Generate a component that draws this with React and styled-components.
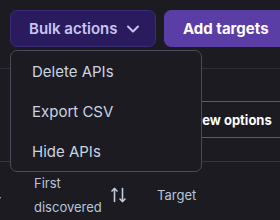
import React from 'react';
import styled, { createGlobalStyle } from 'styled-components';

const Global = createGlobalStyle`
  html, body {
    margin: 0;
    background: #1b1b21;
    overflow: hidden;
  }
  body {
    font-family: Inter, "Noto Sans", sans-serif;
    -webkit-font-smoothing: antialiased;
  }
`;

function ChevronDown() {
  return (
    <svg width="20" height="20" viewBox="0 0 24 24" fill="none" stroke="currentColor" strokeWidth="2.4" strokeLinecap="round" strokeLinejoin="round">
      <path d="m6 9 6 6 6-6" />
    </svg>
  );
}

function SortIcon({ width = 15, height = 16 }) {
  return (
    <svg width={width} height={height} viewBox="0 0 15 16" fill="none" stroke="currentColor" strokeWidth="1.6" strokeLinecap="round" strokeLinejoin="round">
      <path d="M3.5 1.5v13" />
      <path d="M1 4l2.5-2.5L6 4" />
      <path d="M11.5 1.5v13" />
      <path d="M9 12l2.5 2.5L14 12" />
    </svg>
  );
}

export default function App() {
  return (
    <Page>
      <Global />
      <Toolbar>
        <BulkWrap>
          <BulkButton>
            Bulk actions
            <ChevronDown />
          </BulkButton>
          <Menu>
            <MenuItem>Delete APIs</MenuItem>
            <MenuItem>Export CSV</MenuItem>
            <MenuItem>Hide APIs</MenuItem>
          </Menu>
        </BulkWrap>
        <AddButton>Add targets</AddButton>
      </Toolbar>
      <Divider />
      <OptionsRow>
        <ViewOptions>View options</ViewOptions>
      </OptionsRow>
      <TableHead>
        <HeadCell $width="34px">
          <Clipped>
            <SortIcon width={10} height={12} />
          </Clipped>
        </HeadCell>
        <HeadCell $width="123px">
          <Label>
            First
            <br />
            discovered
          </Label>
          <SortIcon />
        </HeadCell>
        <HeadCell>
          <Label>Target</Label>
        </HeadCell>
      </TableHead>
    </Page>
  );
}

const Page = styled.div`
  width: 280px;
  height: 220px;
  overflow: hidden;
`;

const Toolbar = styled.div`
  display: flex;
  gap: 8px;
  padding: 10px 0 0 10px;
  position: relative;
  z-index: 2;
`;

const BulkWrap = styled.div`
  position: relative;
`;

const BulkButton = styled.button`
  display: flex;
  align-items: center;
  gap: 6px;
  height: 37px;
  width: 146px;
  padding: 0 0 0 18px;
  border: 1px solid #3b2c78;
  border-radius: 7px;
  background: #2a1b5e;
  color: #c9c3f3;
  font-family: inherit;
  font-size: 15px;
  font-weight: 600;
  white-space: nowrap;
`;

const AddButton = styled.button`
  height: 37px;
  padding: 0 18px;
  border: 1px solid #5a3ea6;
  border-radius: 7px;
  background: #5a3ea6;
  color: #ffffff;
  font-family: inherit;
  font-size: 15px;
  font-weight: 700;
  white-space: nowrap;
`;

const Menu = styled.div`
  position: absolute;
  top: 40px;
  left: 0;
  width: 190px;
  border: 1px solid #4a4a5c;
  border-radius: 7px;
  background: #1b1b21;
  display: flex;
  flex-direction: column;
`;

const MenuItem = styled.div`
  height: 40px;
  display: flex;
  align-items: center;
  padding-left: 21px;
  color: #cad3e4;
  font-size: 15px;
`;

const Divider = styled.div`
  margin-top: 21px;
  border-top: 1px solid #2d2d37;
`;

const OptionsRow = styled.div`
  display: flex;
  padding: 32px 0 0 176px;
`;

const ViewOptions = styled.div`
  height: 35px;
  flex: 0 0 160px;
  display: flex;
  align-items: center;
  padding-left: 12px;
  border: 1px solid #5a5a6e;
  border-right: none;
  color: #ffffff;
  font-size: 13px;
  font-weight: 700;
  white-space: nowrap;
`;

const TableHead = styled.div`
  margin-top: 23px;
  border-top: 1px solid #363644;
  display: flex;
  align-items: center;
  height: 66px;
`;

const HeadCell = styled.div`
  flex: 0 0 ${({ $width }) => $width || 'auto'};
  display: flex;
  align-items: center;
  gap: 9px;
  color: #c3ccdc;
`;

const Clipped = styled.div`
  margin-left: -9px;
  display: flex;
  color: #c7cfdd;
`;

const Label = styled.div`
  font-size: 13px;
  line-height: 24px;
  color: #b9c5da;
`;
